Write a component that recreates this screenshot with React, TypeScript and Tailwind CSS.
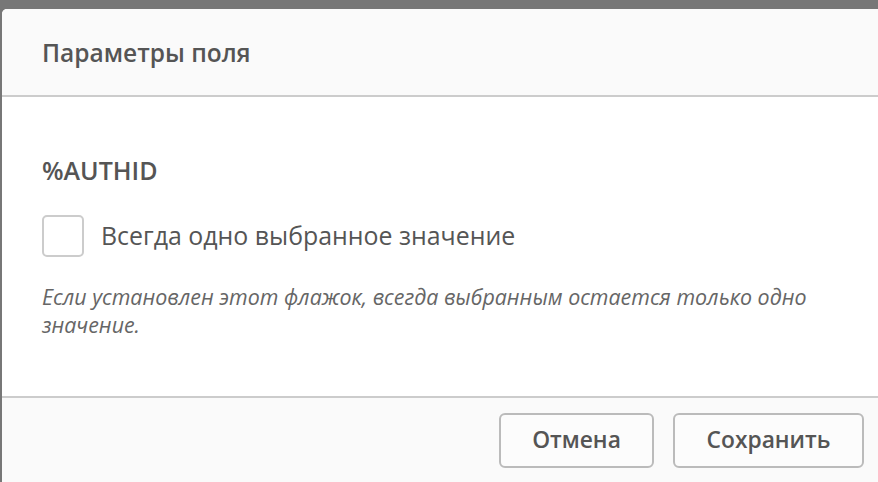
export default function App() {
  return (
    <div
      className="w-[878px] h-[482px] bg-[#777777] pt-[9px] pl-[2px] overflow-hidden"
      style={{ fontFamily: '"Open Sans", "Noto Sans", sans-serif' }}
    >
      <div className="h-[500px] bg-white rounded-tl-[5px] flex flex-col">
        {/* Заголовок */}
        <div className="h-[88px] bg-[#fafafa] rounded-tl-[5px] border-b-2 border-[#cccccc] flex items-center px-[40px] pt-[3px]">
          <h2 className="text-[24.5px] font-semibold text-[#555555]">Параметры поля</h2>
        </div>

        {/* Содержимое */}
        <div className="h-[299px] px-[40px] pt-[57px]">
          <div className="text-[25px] font-semibold text-[#555555] leading-[32px]">%AUTHID</div>
          <label className="flex items-center gap-[17px] mt-[29px]">
            <span className="w-[42px] h-[42px] border-2 border-[#cccccc] rounded-[5px] bg-white shrink-0" />
            <span className="text-[24.9px] text-[#555555]">Всегда одно выбранное значение</span>
          </label>
          <p className="mt-[26px] text-[21.4px] italic text-[#666666] leading-[28px]">
            Если установлен этот флажок, всегда выбранным остается только одно значение.
          </p>
        </div>

        {/* Кнопки */}
        <div className="flex-1 bg-[#fafafa] border-t-2 border-[#cccccc] flex justify-end gap-[19px] pt-[15px] pr-[14px]">
          <button className="w-[155px] h-[55px] border-2 border-[#bbbbbb] rounded-[6px] bg-[#fcfcfc] text-[22.8px] font-semibold text-[#555555]">
            Отмена
          </button>
          <button className="w-[191px] h-[55px] border-2 border-[#bbbbbb] rounded-[6px] bg-[#fcfcfc] text-[22.8px] font-semibold text-[#555555]">
            Сохранить
          </button>
        </div>
      </div>
    </div>
  );
}
